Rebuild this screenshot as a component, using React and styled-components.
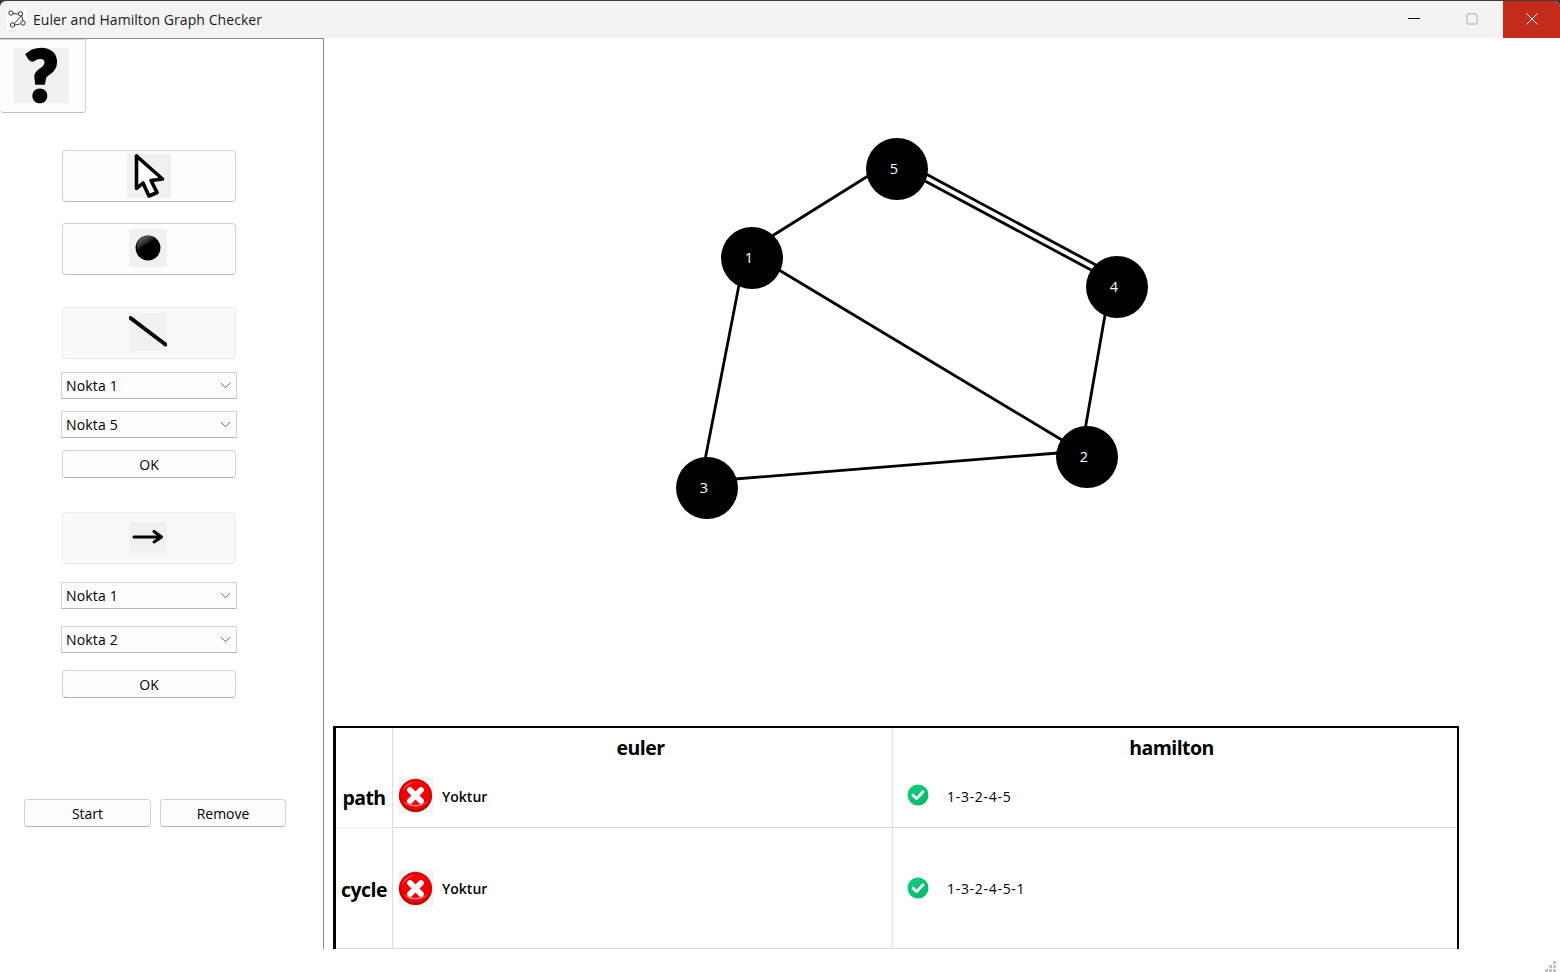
import React from "react";
import styled, { createGlobalStyle } from "styled-components";

const Global = createGlobalStyle`
  html, body { margin: 0; padding: 0; background: #fff; overflow: hidden; }
  * { box-sizing: border-box; }
`;

const FONT = `"Open Sans", "Noto Sans", "Liberation Sans", sans-serif`;

const Window = styled.div`
  width: 1560px;
  height: 972px;
  display: flex;
  flex-direction: column;
  background: #3a3a3a;
  font-family: ${FONT};
  color: #000;
  overflow: hidden;
`;

const TitleBar = styled.header`
  height: 37px;
  flex: none;
  margin-top: 1px;
  display: flex;
  align-items: stretch;
  background: #f3f3f3;
  border-radius: 6px 6px 0 0;
  overflow: hidden;
`;

const AppIcon = styled.div`
  width: 20px;
  height: 20px;
  margin: 8px 6px 0 7px;
  background: #fff;
  display: flex;
`;

const Title = styled.div`
  flex: 1;
  font-size: 14px;
  line-height: 37px;
  letter-spacing: 0.07px;
  color: #1a1a1a;
`;

const WinButton = styled.div`
  width: ${(p) => (p.$close ? 57 : 58)}px;
  margin-right: ${(p) => p.$gap || 0}px;
  display: flex;
  align-items: center;
  justify-content: center;
  padding-bottom: 1px;
  background: ${(p) => (p.$close ? "#c42b1c" : "transparent")};
`;

const Body = styled.div`
  flex: none;
  height: 911px;
  display: flex;
  background: #fff;
`;

const Sidebar = styled.aside`
  width: 324px;
  flex: none;
  border-top: 1px solid #8a8a8a;
  border-right: 1px solid #8a8a8a;
  display: flex;
  flex-direction: column;
`;

const HelpButton = styled.div`
  width: 86px;
  height: 74px;
  flex: none;
  background: #fdfdfd;
  border: 1px solid #d4d4d4;
  border-bottom-color: #bcbcbc;
  border-left: none;
  border-radius: 0 0 4px 4px;
  display: flex;
  align-items: flex-start;
  padding: 8px 0 0 14px;
`;

const HelpTile = styled.div`
  width: 55px;
  height: 55px;
  background: #f0f0f0;
  font-family: Lato, "Liberation Sans", sans-serif;
  font-weight: 900;
  font-size: 70px;
  line-height: 53px;
  text-align: center;
  color: #000;
  -webkit-text-stroke: 3.6px #000;
`;

const Tools = styled.div`
  width: 176px;
  margin: 37px 0 0 61px;
  display: flex;
  flex-direction: column;
  align-items: center;
`;

const ToolButton = styled.div`
  width: 174px;
  height: 52px;
  flex: none;
  margin-top: ${(p) => p.$top || 0}px;
  background: ${(p) => (p.$disabled ? "#f9f9f9" : "#fdfdfd")};
  border: 1px solid ${(p) => (p.$disabled ? "#ececec" : "#d2d2d2")};
  border-bottom-color: ${(p) => (p.$disabled ? "#e6e6e6" : "#bcbcbc")};
  border-radius: 4px;
  display: flex;
  align-items: center;
  justify-content: center;
`;

const Tile = styled.div`
  width: ${(p) => p.$w}px;
  height: ${(p) => p.$h}px;
  margin-right: ${(p) => p.$mr || 0}px;
  margin-bottom: ${(p) => p.$mb || 0}px;
  background: #f0f0f0;
  display: flex;
`;

const Select = styled.div`
  width: 176px;
  height: 27px;
  flex: none;
  margin-top: ${(p) => p.$top || 0}px;
  background: #fdfdfd;
  border: 1px solid #d0d0d0;
  border-bottom-color: #b4b4b4;
  display: flex;
  align-items: center;
  justify-content: space-between;
  padding: 0 5px 0 4px;
  font-size: 14px;
  letter-spacing: 0.18px;
`;

const PushButton = styled.div`
  width: ${(p) => p.$w || 174}px;
  height: 28px;
  flex: none;
  margin-top: ${(p) => p.$top || 0}px;
  background: #fdfdfd;
  border: 1px solid #d2d2d2;
  border-bottom-color: #b0b0b0;
  border-radius: 4px;
  display: flex;
  align-items: center;
  justify-content: center;
  font-size: 14px;
`;

const ActionRow = styled.div`
  display: flex;
  gap: 9px;
  margin: 101px 0 0 24px;
`;

const Main = styled.main`
  flex: 1;
  min-width: 0;
  display: flex;
  flex-direction: column;
`;

const Canvas = styled.svg`
  display: block;
  flex: none;
  width: 1236px;
  height: 688px;
`;

const NodeLabel = styled.text`
  font-family: ${FONT};
  font-size: 14.5px;
  fill: #fff;
  text-anchor: middle;
  dominant-baseline: central;
`;

const ResultTable = styled.div`
  width: 1126px;
  height: 223px;
  margin-left: 9px;
  flex: none;
  border: 2px solid #000;
  border-left-width: 3px;
  border-bottom: none;
  display: grid;
  grid-template-columns: 57px 500px 564px;
  grid-template-rows: 42px 58px 121px;
`;

const Cell = styled.div`
  display: flex;
  align-items: center;
  justify-content: ${(p) => p.$justify || "flex-start"};
  padding-left: ${(p) => p.$pad || 0}px;
  border-right: ${(p) => (p.$noRight ? "none" : "1px solid #dcdcdc")};
  border-bottom: ${(p) => (p.$rule ? `1px solid ${p.$rule}` : "none")};
`;

const Heading = styled.span`
  font-size: 19.5px;
  font-weight: 700;
  letter-spacing: -0.55px;
  margin-top: ${(p) => p.$mt || 0}px;
  margin-right: ${(p) => p.$mr || 0}px;
`;

const None = styled.span`
  font-size: 14px;
  font-weight: 600;
  margin-left: 8px;
  margin-top: 2px;
`;

const PathText = styled.span`
  font-size: 14px;
  letter-spacing: 0.7px;
  margin-left: 18px;
  margin-top: ${(p) => p.$mt || 0}px;
`;

const ResultRow = styled.div`
  display: flex;
  align-items: center;
  margin-bottom: ${(p) => p.$mb || 0}px;
`;

const ErrorTile = styled.div`
  width: 36px;
  height: 36px;
  background: #f4f4f4;
  display: flex;
`;

const StatusBar = styled.footer`
  flex: none;
  height: 23px;
  background: #fff;
  display: flex;
  justify-content: flex-end;
  align-items: flex-end;
`;

const Logo = () => (
  <svg width="20" height="20" viewBox="0 0 20 20" fill="none" stroke="#333" strokeWidth="1">
    <path d="M6 4.5 L11 5 M14 7 L7 15 M8 16 L13 15" />
    <path d="M14.5 6 L16 11.5" />
    <circle cx="4" cy="4" r="2.2" />
    <circle cx="13.5" cy="4.8" r="2.2" />
    <circle cx="5.5" cy="16" r="2.2" />
    <circle cx="16" cy="14" r="2.2" />
  </svg>
);

const Cursor = () => (
  <svg width="44" height="44" viewBox="127 154 44 44">
    <path d="M136.5 156 L136.5 188.5 L143 183 L149 196 L157 192.5 L151 180.5 L162.5 179 Z" fill="#fff" stroke="#000" strokeWidth="3.6" strokeLinejoin="round" />
  </svg>
);

const Ball = () => (
  <svg width="38" height="38" viewBox="129 229 38 38">
    <defs>
      <linearGradient id="ballG" x1="0.15" y1="0.05" x2="0.6" y2="0.55">
        <stop offset="0" stopColor="#777" />
        <stop offset="0.75" stopColor="#222" />
        <stop offset="1" stopColor="#000" />
      </linearGradient>
    </defs>
    <circle cx="148" cy="248" r="12.5" fill="#000" />
    <path d="M137 245 A 11.5 11.5 0 0 1 157 240 Q 146 243 137 251 Z" fill="url(#ballG)" />
  </svg>
);

const Slash = () => (
  <svg width="38" height="38" viewBox="129 313 38 38">
    <line x1="130.5" y1="318" x2="165.5" y2="344.5" stroke="#000" strokeWidth="4" strokeLinecap="round" />
  </svg>
);

const ArrowGlyph = () => (
  <svg width="38" height="31" viewBox="129 522 38 31">
    <path d="M134 537 H161 M154 531.5 L161.5 537 L154 542" fill="none" stroke="#000" strokeWidth="3" strokeLinecap="round" strokeLinejoin="round" />
  </svg>
);

const Chevron = () => (
  <svg width="11" height="7" viewBox="0 0 11 7">
    <path d="M0.8 1 L5.5 5.7 L10.2 1" fill="none" stroke="#606060" strokeWidth="1" />
  </svg>
);

const RedX = ({ id }) => (
  <svg width="36" height="36" viewBox="0 0 36 36">
    <defs>
      <radialGradient id={id} cx="0.5" cy="0.45" r="0.55">
        <stop offset="0" stopColor="#ff0000" />
        <stop offset="0.82" stopColor="#f00000" />
        <stop offset="1" stopColor="#b40000" />
      </radialGradient>
    </defs>
    <circle cx="17.5" cy="18.5" r="16.3" fill={`url(#${id})`} stroke="#a00000" strokeWidth="0.8" />
    <path d="M5 24.5 Q17.5 34.5 30 24.5 Q17.5 31.5 5 24.5 Z" fill="#ffb0b0" opacity="0.75" />
    <path d="M4 14.5 Q7 5.5 17.5 4.5 Q10 7.5 4 14.5 Z" fill="#ff9090" opacity="0.5" />
    <path d="M12 13 L23 24 M23 13 L12 24" stroke="#fff" strokeWidth="5.8" strokeLinecap="round" />
  </svg>
);

const GreenCheck = ({ id }) => (
  <svg width="22" height="22" viewBox="0 0 22 22">
    <defs>
      <linearGradient id={id} x1="0" y1="0" x2="1" y2="1">
        <stop offset="0" stopColor="#12d27c" />
        <stop offset="1" stopColor="#04b56b" />
      </linearGradient>
    </defs>
    <circle cx="11" cy="11" r="10.5" fill={`url(#${id})`} />
    <path d="M6 11.2 L9.6 14.6 L16 7.8" fill="none" stroke="#fff" strokeWidth="2.8" strokeLinecap="round" strokeLinejoin="round" />
  </svg>
);

const Grip = () => (
  <svg width="16" height="12" viewBox="0 0 16 12" fill="#c2c2c2">
    <rect x="9" y="1" width="3" height="3" />
    <rect x="5" y="5" width="3" height="3" />
    <rect x="9" y="5" width="3" height="3" />
    <rect x="1" y="9" width="3" height="3" />
    <rect x="5" y="9" width="3" height="3" />
    <rect x="9" y="9" width="3" height="3" />
  </svg>
);

const nodes = [
  { n: 1, x: 752, y: 258, lx: 749 },
  { n: 2, x: 1087, y: 457, lx: 1084 },
  { n: 3, x: 707, y: 488, lx: 704 },
  { n: 4, x: 1117, y: 287, lx: 1114 },
  { n: 5, x: 897, y: 169, lx: 894 },
];

const edges = [
  [772, 236, 868, 176],
  [739, 285, 705, 460],
  [779, 270, 1062, 440],
  [735, 479, 1058, 453],
  [1105, 315, 1085, 430],
  [926, 174, 1096, 265],
  [925, 181, 1093, 271],
];

export default function App() {
  return (
    <Window>
      <Global />
      <TitleBar>
        <AppIcon><Logo /></AppIcon>
        <Title>Euler and Hamilton Graph Checker</Title>
        <WinButton>
          <svg width="12" height="2" viewBox="0 0 12 2"><rect width="12" height="1" fill="#111" /></svg>
        </WinButton>
        <WinButton $gap={2}>
          <svg width="12" height="12" viewBox="0 0 12 12"><rect x="1" y="1" width="10" height="10" rx="1.5" fill="none" stroke="#c4c4c4" strokeWidth="1.4" /></svg>
        </WinButton>
        <WinButton $close>
          <svg width="12" height="12" viewBox="0 0 12 12"><path d="M0.5 0.5 L11.5 11.5 M11.5 0.5 L0.5 11.5" stroke="#fff" strokeWidth="1" /></svg>
        </WinButton>
      </TitleBar>
      <Body>
        <Sidebar>
          <HelpButton>
            <HelpTile>?</HelpTile>
          </HelpButton>
          <Tools>
            <ToolButton><Tile $w={44} $h={44}><Cursor /></Tile></ToolButton>
            <ToolButton $top={21}><Tile $w={38} $h={38} $mr={2} $mb={2}><Ball /></Tile></ToolButton>
            <ToolButton $top={32} $disabled><Tile $w={38} $h={38} $mr={2} $mb={2}><Slash /></Tile></ToolButton>
            <Select $top={13}>Nokta 1<Chevron /></Select>
            <Select $top={12}>Nokta 5<Chevron /></Select>
            <PushButton $top={12}>OK</PushButton>
            <ToolButton $top={34} $disabled><Tile $w={38} $h={31} $mr={2} $mb={1}><ArrowGlyph /></Tile></ToolButton>
            <Select $top={18}>Nokta 1<Chevron /></Select>
            <Select $top={17}>Nokta 2<Chevron /></Select>
            <PushButton $top={17}>OK</PushButton>
          </Tools>
          <ActionRow>
            <PushButton $w={127}>Start</PushButton>
            <PushButton $w={126}>Remove</PushButton>
          </ActionRow>
        </Sidebar>
        <Main>
          <Canvas viewBox="324 38 1236 688">
            {edges.map(([x1, y1, x2, y2]) => (
              <line key={`${x1}-${y1}`} x1={x1} y1={y1} x2={x2} y2={y2} stroke="#000" strokeWidth="2.8" />
            ))}
            {nodes.map((d) => (
              <g key={d.n}>
                <circle cx={d.x} cy={d.y} r="31" fill="#000" />
                <NodeLabel x={d.lx} y={d.y - 0.5}>{d.n}</NodeLabel>
              </g>
            ))}
          </Canvas>
          <ResultTable>
            <Cell />
            <Cell $justify="center"><Heading $mr={4} $mt={-4}>euler</Heading></Cell>
            <Cell $noRight $justify="center"><Heading $mr={7} $mt={-4}>hamilton</Heading></Cell>
            <Cell $rule="#eeeeee" $justify="center"><Heading $mt={-3}>path</Heading></Cell>
            <Cell $rule="#d8d8d8" $pad={5}>
              <ResultRow $mb={7}>
                <ErrorTile><RedX id="xa" /></ErrorTile>
                <None>Yoktur</None>
              </ResultRow>
            </Cell>
            <Cell $rule="#d8d8d8" $noRight $pad={14}>
              <ResultRow $mb={8}>
                <GreenCheck id="ca" />
                <PathText $mt={3}>1-3-2-4-5</PathText>
              </ResultRow>
            </Cell>
            <Cell $rule="#dcdcdc" $justify="center"><Heading $mt={2}>cycle</Heading></Cell>
            <Cell $rule="#dcdcdc" $pad={5}>
              <ResultRow $mb={1}>
                <ErrorTile><RedX id="xb" /></ErrorTile>
                <None>Yoktur</None>
              </ResultRow>
            </Cell>
            <Cell $rule="#dcdcdc" $noRight $pad={14}>
              <ResultRow $mb={1}>
                <GreenCheck id="cb" />
                <PathText $mt={1}>1-3-2-4-5-1</PathText>
              </ResultRow>
            </Cell>
          </ResultTable>
        </Main>
      </Body>
      <StatusBar><Grip /></StatusBar>
    </Window>
  );
}
